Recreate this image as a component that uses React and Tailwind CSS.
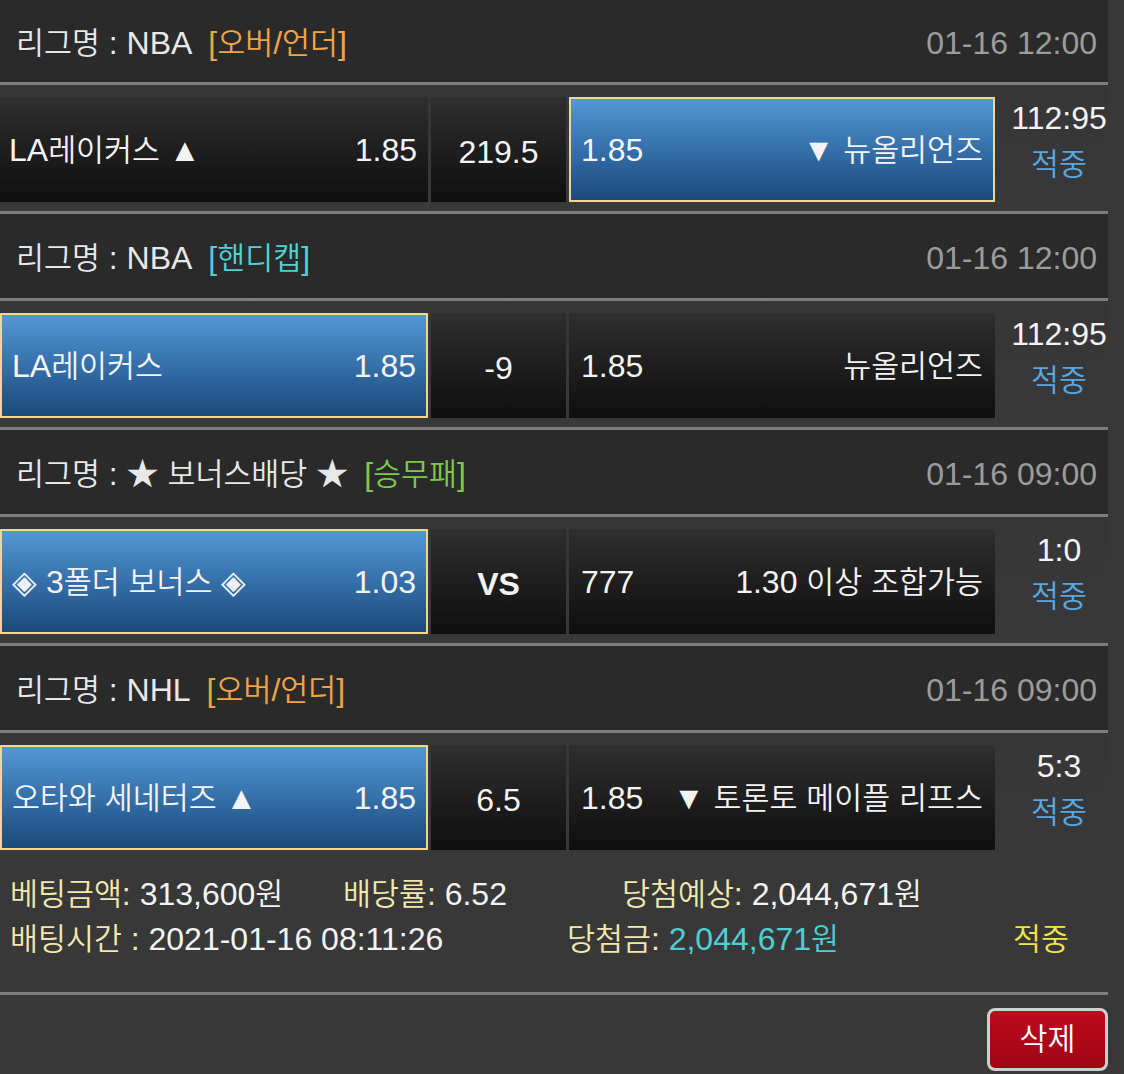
import React, { Fragment } from 'react';

const games = [
  {
    league: 'NBA', type: '[오버/언더]', typeColor: 'text-[#f0a446]', time: '01-16 12:00',
    home: 'LA레이커스 ▲', homeOdds: '1.85', mid: '219.5', awayOdds: '1.85', away: '▼ 뉴올리언즈',
    pick: 'away', score: '112:95',
  },
  {
    league: 'NBA', type: '[핸디캡]', typeColor: 'text-[#4fd2d6]', time: '01-16 12:00',
    home: 'LA레이커스', homeOdds: '1.85', mid: '-9', awayOdds: '1.85', away: '뉴올리언즈',
    pick: 'home', score: '112:95',
  },
  {
    league: '★ 보너스배당 ★', type: '[승무패]', typeColor: 'text-[#7cc84a]', time: '01-16 09:00',
    home: '◈ 3폴더 보너스 ◈', homeOdds: '1.03', mid: 'VS', bold: true, awayOdds: '777', away: '1.30 이상 조합가능',
    pick: 'home', score: '1:0',
  },
  {
    league: 'NHL', type: '[오버/언더]', typeColor: 'text-[#f0a446]', time: '01-16 09:00',
    home: '오타와 세네터즈 ▲', homeOdds: '1.85', mid: '6.5', awayOdds: '1.85', away: '▼ 토론토 메이플 리프스',
    pick: 'home', score: '5:3',
  },
];

// hangul in the shot is a bit smaller and lighter than Noto CJK at the same size
const K = ({ children }) =>
  String(children)
    .split(/([\uAC00-\uD7A3]+)/)
    .map((part, i) =>
      /[\uAC00-\uD7A3]/.test(part) ? (
        <span key={i} className="text-[0.95em] font-[350]">{part}</span>
      ) : (
        <Fragment key={i}>{part}</Fragment>
      )
    );

const Line = () => <div className="h-[3px] bg-[#7d7d7d]" />;

const cellBase = 'h-full flex items-center';
const dark = 'bg-linear-to-b from-[#2f2f2f] to-[#0f0f0f]';
const blue = 'bg-linear-to-b from-[#5298d8] to-[#1b497c] border-2 border-[#f3d68e]';

const Header = ({ g, first }) => (
  <div className={`flex items-center justify-between bg-[#2a2a2a] pl-4 pr-[11px] pt-1 ${first ? 'h-[82px]' : 'h-[84px]'}`}>
    <div className="flex items-center text-[#e8e8e8]">
      <span><K>{`리그명 : ${g.league}`}</K></span>
      <span className={`ml-4 ${g.typeColor}`}><K>{g.type}</K></span>
    </div>
    <span className="text-[#9c9c9c]">{g.time}</span>
  </div>
);

const GameRow = ({ g }) => (
  <div className="flex h-[126px] gap-[3px] bg-linear-to-b from-[#363636] to-[#393939] pt-[12px] pb-[9px]">
    <div className={`${cellBase} w-[428px] justify-between ${g.pick === 'home' ? `${blue} px-[10px]` : `${dark} pl-[9px] pr-[11px]`}`}>
      <span><K>{g.home}</K></span>
      <span>{g.homeOdds}</span>
    </div>
    <div className={`${cellBase} ${dark} w-[135px] justify-center pt-1 ${g.bold ? 'font-bold' : ''}`}>
      {g.mid}
    </div>
    <div className={`${cellBase} w-[426px] justify-between ${g.pick === 'away' ? `${blue} px-[10px]` : `${dark} px-[12px]`}`}>
      <span>{g.awayOdds}</span>
      <span><K>{g.away}</K></span>
    </div>
    <div className="flex flex-1 flex-col items-center pl-3 -mt-[2px] leading-[46px]">
      <span>{g.score}</span>
      <span className="text-[#5aa6e2]"><K>적중</K></span>
    </div>
  </div>
);

export default function App() {
  return (
    <div className="min-h-[1074px] bg-[#383838] text-[32px] text-[#f4f4f4] font-['Liberation_Sans','Noto_Sans_CJK_KR',sans-serif] overflow-hidden">
      <div className="w-[1108px]">
        {games.map((g, i) => (
          <Fragment key={i}>
            {i > 0 && <Line />}
            <Header g={g} first={i === 0} />
            <Line />
            <GameRow g={g} />
          </Fragment>
        ))}

        <div className="pl-[10px] pt-[13px] pb-[30px] text-[32px] leading-[45px]">
          <div className="flex">
            <span className="w-[333px]">
              <span className="text-[#f3e8ae]"><K>베팅금액:</K></span> <K>313,600원</K>
            </span>
            <span className="w-[279px]">
              <span className="text-[#f3e8ae]"><K>배당률:</K></span> 6.52
            </span>
            <span>
              <span className="text-[#f3e8ae]"><K>당첨예상:</K></span> <K>2,044,671원</K>
            </span>
          </div>
          <div className="flex">
            <span className="w-[557px]">
              <span className="text-[#f3e8ae]"><K>배팅시간</K> :</span> 2021-01-16 08:11:26
            </span>
            <span className="w-[446px]">
              <span className="text-[#f3e8ae]"><K>당첨금:</K></span>{' '}
              <span className="text-[#4fcfd3]"><K>2,044,671원</K></span>
            </span>
            <span className="text-[#f5e24c]"><K>적중</K></span>
          </div>
        </div>
        <Line />
        <div className="flex justify-end pt-[13px]">
          <button className="flex h-[63px] w-[121px] items-center justify-center rounded-[8px] border-[3px] border-[#cfcfcf] bg-linear-to-b from-[#bf0a1e] to-[#9e0614] text-[32px] text-white">
            <K>삭제</K>
          </button>
        </div>
      </div>
    </div>
  );
}
